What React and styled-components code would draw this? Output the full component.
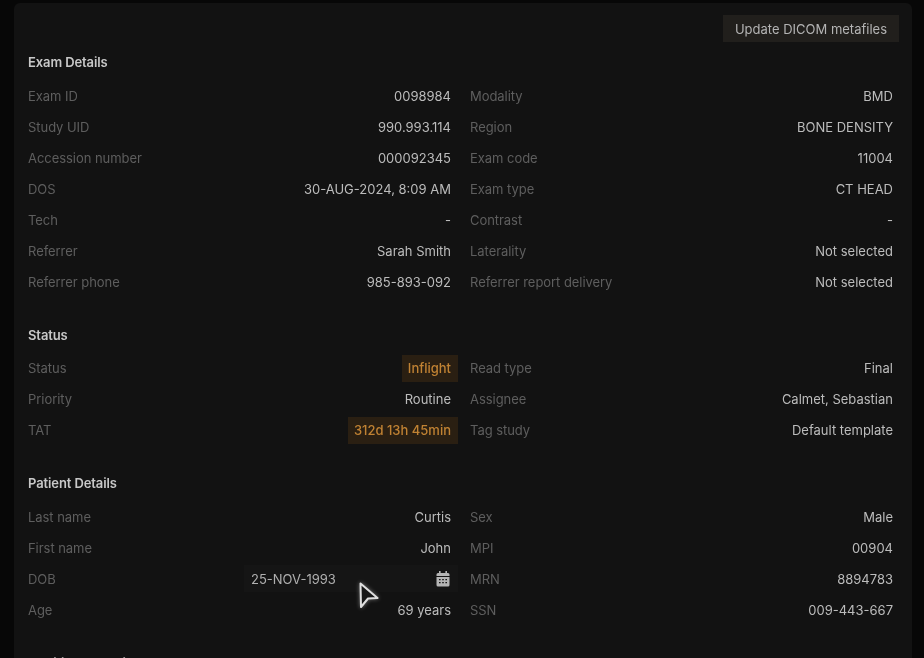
import React from "react";
import styled, { createGlobalStyle } from "styled-components";

const Global = createGlobalStyle`
  html, body { margin: 0; padding: 0; background: #070707; height: 100%; overflow: hidden; }
  #root { height: 100%; }
`;

const Page = styled.div`
  position: relative;
  height: 658px;
  width: 924px;
  overflow: hidden;
  padding: 3px 12px 0 14px;
  box-sizing: border-box;
  font-family: Inter, "Liberation Sans", sans-serif;
  font-size: 13px;
  background: #070707;
`;

const Panel = styled.main`
  height: 700px;
  background: #121212;
  border-radius: 6px 6px 0 0;
  padding: 12px 12px 0 14px;
  box-sizing: border-box;
  filter: blur(0.3px);
`;

const Toolbar = styled.div`
  display: flex;
  justify-content: flex-end;
  height: 27px;
  margin: 0 1px 10px 0;
`;

const ActionButton = styled.button`
  height: 27px;
  width: 176px;
  border: 0;
  padding: 0;
  background: #211f1c;
  color: #b4b4b4;
  font: 400 13px Inter, "Liberation Sans", sans-serif;
`;

const Section = styled.section`
  margin-bottom: 28px;
`;

const Heading = styled.h2`
  margin: 0 0 ${(p) => (p.$tight ? "7px" : "8px")};
  height: 20px;
  line-height: 20px;
  font-size: 13px;
  font-weight: 600;
  color: #c8c8c8;
  letter-spacing: -0.1px;
`;

const Grid = styled.div`
  display: grid;
  grid-template-columns: 430px 436px;
  column-gap: 6px;
`;

const Row = styled.div`
  display: flex;
  align-items: center;
  justify-content: space-between;
  height: 31px;
`;

const Label = styled.span`
  padding-left: ${(p) => (p.$inset ? "6px" : "0")};
  color: #5e5e5e;
  letter-spacing: -0.05px;
`;

const Value = styled.span`
  padding: 0 7px 0 6px;
  height: 27px;
  line-height: 29px;
  color: #bcbcbc;
  font-weight: 400;
`;

const Flag = styled(Value)`
  margin-top: 2px;
  line-height: 27px;
  background: #2a1f12;
  color: #c08233;
  font-weight: 500;
`;

const DateField = styled.div`
  display: flex;
  align-items: center;
  justify-content: space-between;
  box-sizing: border-box;
  width: 214px;
  height: 27px;
  padding: 0 8px 0 7px;
  background: #151515;
  color: #b0b0b0;
  font-weight: 400;
`;

const Pointer = styled.svg`
  position: absolute;
  left: 355px;
  top: 578px;
  filter: drop-shadow(0 0 2px rgba(255, 255, 255, 0.4));
`;

const CalendarIcon = () => (
  <svg width="14" height="16" viewBox="0 0 14 16" aria-hidden="true">
    <rect x="3" y="0" width="1.6" height="3" fill="#b5b5b5" />
    <rect x="9.4" y="0" width="1.6" height="3" fill="#b5b5b5" />
    <path d="M2 2h10a1.5 1.5 0 0 1 1.5 1.5V5H.5V3.500A1.500 1.500 0 0 1 2 2z" fill="#b5b5b5" />
    <path
      fillRule="evenodd"
      d="M.5 6h13v8a1.500 1.500 0 0 1-1.500 1.500H2A1.500 1.500 0 0 1 .5 14zM3 8v1.300h1.600V8zM6.200 8v1.300h1.600V8zM9.400 8v1.300H11V8zM3 11v1.300h1.600V11zM6.200 11v1.300h1.600V11zM9.400 11v1.300H11V11z"
      fill="#b5b5b5"
    />
  </svg>
);

const sections = [
  {
    title: "Exam Details",
    rows: [
      ["Exam ID", "0098984", "Modality", "BMD"],
      ["Study UID", "990.993.114", "Region", "BONE DENSITY"],
      ["Accession number", "000092345", "Exam code", "11004"],
      ["DOS", "30-AUG-2024, 8:09 AM", "Exam type", "CT HEAD"],
      ["Tech", "-", "Contrast", "-"],
      ["Referrer", "Sarah Smith", "Laterality", "Not selected"],
      ["Referrer phone", "985-893-092", "Referrer report delivery", "Not selected"],
    ],
  },
  {
    title: "Status",
    tight: true,
    rows: [
      ["Status", <Flag key="f">Inflight</Flag>, "Read type", "Final"],
      ["Priority", "Routine", "Assignee", "Calmet, Sebastian"],
      ["TAT", <Flag key="t">312d 13h 45min</Flag>, "Tag study", "Default template"],
    ],
  },
  {
    title: "Patient Details",
    rows: [
      ["Last name", "Curtis", "Sex", "Male"],
      ["First name", "John", "MPI", "00904"],
      [
        "DOB",
        <DateField key="d">
          25-NOV-1993
          <CalendarIcon />
        </DateField>,
        "MRN",
        "8894783",
      ],
      ["Age", "69 years", "SSN", "009-443-667"],
    ],
  },
];

const cell = (v) => (typeof v === "string" ? <Value>{v}</Value> : v);

export default function App() {
  return (
    <Page>
      <Global />
      <Panel>
        <Toolbar>
          <ActionButton>Update DICOM metafiles</ActionButton>
        </Toolbar>
        {sections.map((s) => (
          <Section key={s.title}>
            <Heading $tight={s.tight}>{s.title}</Heading>
            <Grid>
              {s.rows.map(([a, b, c, d]) => (
                <React.Fragment key={a}>
                  <Row>
                    <Label>{a}</Label>
                    {cell(b)}
                  </Row>
                  <Row>
                    <Label $inset>{c}</Label>
                    {cell(d)}
                  </Row>
                </React.Fragment>
              ))}
            </Grid>
          </Section>
        ))}
        <Heading>Additional Details</Heading>
      </Panel>
      <Pointer width="30" height="36" viewBox="0 0 30 36" aria-hidden="true">
        <path d="M5.500 5.500 L22.500 20 L13 20.500 L6 29 Z" fill="#161616" stroke="#dedede" strokeWidth="2" strokeLinejoin="round" />
      </Pointer>
    </Page>
  );
}
